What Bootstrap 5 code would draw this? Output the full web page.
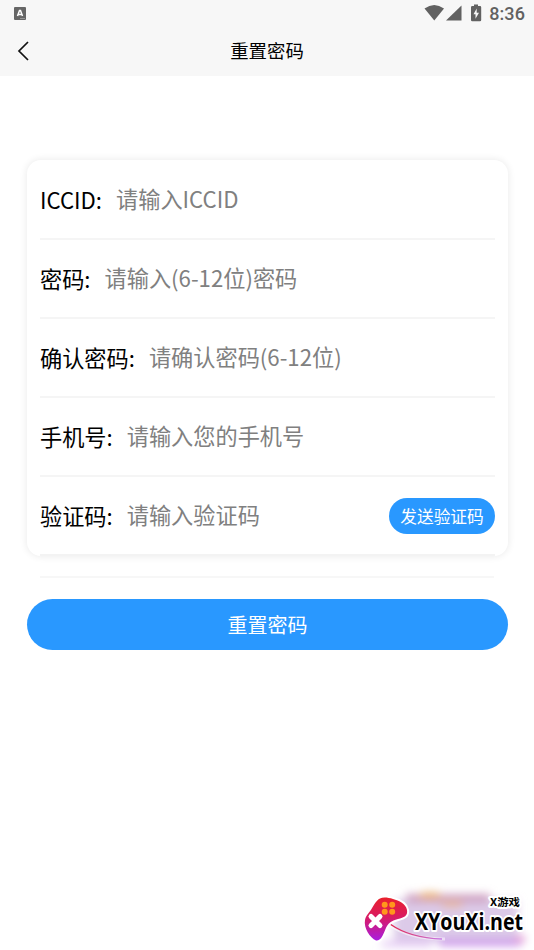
<!DOCTYPE html>
<html lang="zh-CN">
<head>
<meta charset="utf-8">
<meta name="viewport" content="width=device-width, initial-scale=1">
<title>重置密码</title>
<link href="https://cdn.jsdelivr.net/npm/bootstrap@5.3.0/dist/css/bootstrap.min.css" rel="stylesheet">
<style>
body{font-family:"Noto Sans CJK SC",sans-serif;color:#000;height:950px;overflow:hidden}
.topbar{background:#f7f7f7;height:76px}
.status{height:27px;padding:0 9px 0 13px}
.clock{font:500 18px/27px Roboto,sans-serif;color:#616161;letter-spacing:.1px}
.titlebar{height:48px;padding-left:17px}
.page-title{font-size:18.4px;line-height:27px;font-weight:400;color:#000;margin:0 30px 1px 0}
.form-panel{margin:84px 26px 0 27px;padding:1px 13px 0;height:396px;border-radius:14px;box-shadow:0 0 7px 1px rgba(0,0,0,.075)}
.field{height:79px;border-bottom:2px solid #f5f5f5}
.field:last-child{border-bottom-color:#f3f3f3}
.field label{font-size:22.2px;line-height:32px;margin:-2px 14px 0 0;white-space:nowrap}
.field input{font-size:22.2px;line-height:32px;height:34px;min-width:0;color:#000;margin-top:-4px}
.field input::placeholder{color:#808080;opacity:1}
.blue-btn{background:#2998ff;color:#fff;border:0}
.blue-btn:hover{background:#2998ff;color:#fff}
.send{width:106px;height:36px;font-size:16.7px;line-height:36px}
.divider{height:2px;background:#f7f7f7;margin:20px 40px 21px}
.submit{margin:0 26px 0 27px;height:51px}
.submit .btn{font-size:20px;line-height:50px}
.watermark{right:0;bottom:0}
</style>
</head>
<body class="bg-white position-relative">
<header class="topbar">
  <div class="status d-flex align-items-center justify-content-between">
    <svg width="14" height="14" viewBox="0 0 14 14"><rect x="1" y="0" width="12" height="13" rx="1" fill="#666"/><path d="M4.500 9 6.500 3.500h1l2 5.500M5.200 7.500h3.600" fill="none" stroke="#fff" stroke-width="1.500"/><path d="M7 11.500h5" stroke="#aaa" stroke-width=".7"/></svg>
    <div class="d-flex align-items-center">
      <svg width="65" height="27" viewBox="0 0 65 27" fill="#616161"><path d="M.5 8.500Q10.300 1.500 20 8.500L10.300 20.500Z"/><path d="M37.500 5.500V20.500H22Z"/><path fill-rule="evenodd" d="M50 4.500h4V6h2q1.200 0 1.200 1.200V20q0 1.200-1.200 1.200h-7.800Q47 21.200 47 20V7.200Q47 6 48.200 6H50ZM52.700 8.500 49.500 14.200h2v4.600l3.500-6h-2.300Z"/></svg>
      <span class="clock">8:36</span>
    </div>
  </div>
  <div class="titlebar d-flex align-items-center">
    <svg width="13" height="20" viewBox="0 0 13 20"><path d="M11 1 2 10l9 9" fill="none" stroke="#111" stroke-width="1.700"/></svg>
    <h1 class="page-title flex-fill text-center">重置密码</h1>
  </div>
</header>
<main>
  <form>
    <section class="form-panel bg-white">
      <div class="field d-flex align-items-center"><label for="iccid">ICCID:</label><input id="iccid" class="border-0 p-0 flex-fill bg-transparent" placeholder="请输入ICCID"></div>
      <div class="field d-flex align-items-center"><label for="pw">密码:</label><input id="pw" class="border-0 p-0 flex-fill bg-transparent" placeholder="请输入(6-12位)密码"></div>
      <div class="field d-flex align-items-center"><label for="pw2">确认密码:</label><input id="pw2" class="border-0 p-0 flex-fill bg-transparent" placeholder="请确认密码(6-12位)"></div>
      <div class="field d-flex align-items-center"><label for="tel">手机号:</label><input id="tel" class="border-0 p-0 flex-fill bg-transparent" placeholder="请输入您的手机号"></div>
      <div class="field d-flex align-items-center"><label for="code">验证码:</label><input id="code" class="border-0 p-0 flex-fill bg-transparent" placeholder="请输入验证码"><button type="button" class="send btn blue-btn rounded-pill p-0 flex-shrink-0">发送验证码</button></div>
    </section>
    <div class="divider"></div>
    <div class="submit d-flex"><button type="button" class="btn blue-btn rounded-pill w-100 p-0">重置密码</button></div>
  </form>
</main>
<svg class="watermark position-absolute" width="190" height="70" viewBox="0 0 190 70" role="img" aria-label="XYouXi.net">
  <defs>
    <filter id="soft" filterUnits="userSpaceOnUse" x="0" y="-10" width="210" height="100"><feGaussianBlur stdDeviation="4.500"/></filter>
    <linearGradient id="pad" x1="0" y1="0" x2="0" y2="1"><stop offset="0" stop-color="#e9212c"/><stop offset=".45" stop-color="#d91b62"/><stop offset="1" stop-color="#a91de0"/></linearGradient>
    <linearGradient id="tail"><stop offset="0" stop-color="#e0254f"/><stop offset="1" stop-color="#c77be8"/></linearGradient>
  </defs>
  <g filter="url(#soft)">
    <rect x="50" y="20" width="124" height="42" fill="#dccae8"/>
    <rect x="62" y="14" width="84" height="9" fill="#cfa3c3"/>
    <ellipse cx="86" cy="16" rx="12" ry="4" fill="#e9b480"/>
    <ellipse cx="108" cy="24" rx="12" ry="4" fill="#e6b9a4"/>
    <rect x="95" y="59" width="82" height="7" fill="#cc95ea"/>
    <rect x="38" y="61" width="50" height="6" fill="#e5cbf4"/>
    <ellipse cx="176" cy="59" rx="6" ry="4" fill="#e7a5da"/>
  </g>
  <path d="M44 44Q65 59 101 59" fill="none" stroke="#fff" stroke-width="3" opacity=".5"/>
  <path d="M46 44Q66 58 98 59" fill="none" stroke="url(#tail)" stroke-width="1.500"/>
  <path d="M36 18.500C39 17 44 17.500 49 19C55 20.500 62 24 63 30C64 36 60 37.500 54 39C47 41 44 43 41.500 49C39 55 37 61 32 60.500C26 58 19.500 48 21 40C22 35 25 33 27.500 29C30 25 32 20.500 36 18.500Z" fill="url(#pad)" stroke="#fff" stroke-width="4" paint-order="stroke"/>
  <path d="m27 36.500 9 9M36 36.500 27 45.500" stroke="#fff" stroke-width="5" stroke-linecap="round"/>
  <g fill="#ff971c"><circle cx="40.700" cy="24.800" r="3"/><circle cx="48.200" cy="24.800" r="3"/><circle cx="40.700" cy="31.800" r="3"/><circle cx="48.200" cy="31.800" r="3"/></g>
  <g fill="#000" stroke="#fff" stroke-width="4" stroke-linejoin="round" paint-order="stroke" font-weight="700">
    <text x="71" y="50" font-size="24" font-family="'Open Sans','Noto Sans',sans-serif" textLength="108" lengthAdjust="spacingAndGlyphs">XYouXi.net</text>
    <text x="146" y="26" font-size="10.500" font-family="'Noto Sans CJK SC',sans-serif" textLength="30" lengthAdjust="spacingAndGlyphs">X游戏</text>
  </g>
</svg>
<script src="https://cdn.jsdelivr.net/npm/bootstrap@5.3.0/dist/js/bootstrap.bundle.min.js"></script>
</body>
</html>
